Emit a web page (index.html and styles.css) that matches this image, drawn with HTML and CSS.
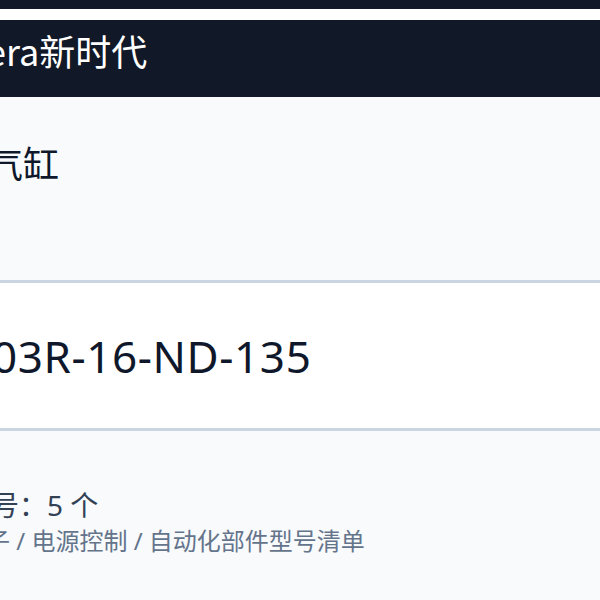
FILE: index.html
```html
<!DOCTYPE html>
<html lang="zh-CN">
<head>
<meta charset="utf-8">
<link rel="stylesheet" href="styles.css">
</head>
<body>
<div class="topbar"></div>
<div class="gap"></div>
<header class="hero"><span class="hero-text">era新时代</span></header>
<section class="row row-light row-name"><span class="name">气缸</span></section>
<section class="row row-white row-model"><span class="model">03R-16-ND-135</span></section>
<section class="row row-light row-meta">
  <div class="count">号：5 个</div>
  <div class="crumbs">子 / 电源控制 / 自动化部件型号清单</div>
</section>
</body>
</html>
```
FILE: styles.css
```css
html, body {
  margin: 0;
  padding: 0;
}
body {
  background: #f8fafc;
  font-family: "Noto Sans", "Noto Sans CJK SC", sans-serif;
  color: #0f172a;
  overflow: hidden;
  width: 600px;
  height: 600px;
}
.topbar {
  height: 9px;
  background: #111827;
}
.gap {
  height: 11px;
  background: #ffffff;
}
.hero {
  height: 77px;
  box-sizing: border-box;
  padding-top: 5px;
  background: #111827;
  color: #ffffff;
  overflow: hidden;
  white-space: nowrap;
}
.hero-text {
  display: inline-block;
  font-family: "Noto Sans CJK SC", sans-serif;
  font-size: 36px;
  line-height: 50px;
  margin-left: -14px;
}
.row {
  overflow: hidden;
  white-space: nowrap;
}
.row-light {
  background: #f8fafc;
}
.row-white {
  background: #ffffff;
}
.row-name {
  border-bottom: 3px solid #cbd5e1;
  box-sizing: border-box;
  height: 186px;
  padding-top: 44px;
}
.name {
  font-size: 36px;
  display: inline-block;
  margin-left: -13px;
  line-height: 48px;
}
.row-model {
  height: 148px;
  border-bottom: 3px solid #cbd5e1;
  box-sizing: border-box;
  display: flex;
  align-items: center;
}
.model {
  font-size: 44px;
  margin-left: -8px;
  letter-spacing: 0.6px;
}
.row-meta {
  padding-top: 55px;
}
.count {
  font-size: 28px;
  color: #334155;
  margin-left: -9px;
  line-height: 38px;
}
.crumbs {
  font-size: 24px;
  color: #64748b;
  margin-left: -14px;
  line-height: 34px;
}
```
